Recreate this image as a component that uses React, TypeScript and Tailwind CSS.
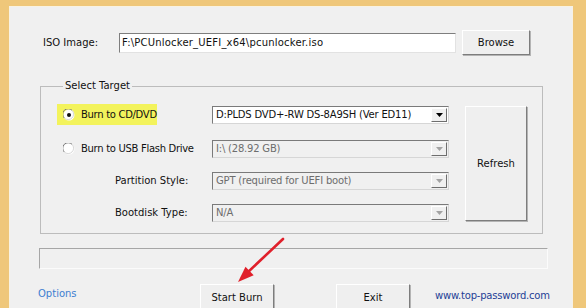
import clsx from "clsx";

const Radio = ({ checked }: { checked?: boolean }) => (
  <svg width="12" height="12" viewBox="0 0 12 12" className="shrink-0">
    <circle cx="6" cy="6" r="5.5" fill="#ffffff" />
    <path d="M1.3 9 A5.2 5.2 0 0 1 9 1.3" fill="none" stroke="#7b7b7b" strokeWidth="1" />
    <path d="M9 1.3 A5.2 5.2 0 0 1 1.3 9" fill="none" stroke="#d8d8d8" strokeWidth="1" />
    {checked && <circle cx="6" cy="6" r="2" fill="#111111" />}
  </svg>
);

type ComboProps = {
  value: string;
  enabled?: boolean;
};

const Combo = ({ value, enabled }: ComboProps) => (
  <div
    className={clsx(
      "flex h-[18px] w-[237px] items-stretch border border-t-[#7a7a7a] border-l-[#7a7a7a] border-r-[#d6d6d6] border-b-[#d6d6d6]",
      enabled ? "bg-white" : "bg-[#f0f0f0]",
    )}
  >
    <span
      className={clsx(
        "flex-1 truncate pl-[3px] leading-[16px] tracking-[-0.2px]",
        enabled ? "text-[#111]" : "text-[#6d6d6d]",
      )}
    >
      {value}
    </span>
    <span className="my-px mr-px flex w-[16px] items-center justify-center border border-t-white border-l-white border-r-[#6e6e6e] border-b-[#6e6e6e] bg-[#f0f0f0]">
      <svg width="7" height="4" viewBox="0 0 7 4">
        <path d="M0 0 H7 L3.5 4 Z" fill={enabled ? "#000" : "#a3a3a3"} />
      </svg>
    </span>
  </div>
);

const Button = ({ label, className }: { label: string; className: string }) => (
  <div
    className={clsx(
      "flex items-center justify-center border border-t-white border-l-white border-r-[#7d7d7d] border-b-[#7d7d7d] bg-[#efefef] text-[#111] shadow-[1px_1px_0_#b4b4b4]",
      className,
    )}
  >
    {label}
  </div>
);

export default function App() {
  return (
    <div className="relative h-[308px] w-[586px] overflow-hidden bg-[#efc77a] pr-[13px] pl-[9px] pt-[6px] font-['DejaVu_Sans',Tahoma,sans-serif] text-[10px] text-[#111]">
      <div className="h-[330px] border-t border-r border-l border-t-[#f8f2e2] border-r-[#f6f1e6] border-l-[#f8f2e2] bg-[#f0f0f0]">
        {/* iso row */}
        <div className="mt-[23px] flex h-[25px] items-center pl-[33px]">
          <span className="w-[76px]">ISO Image:</span>
          <div className="flex h-[20px] w-[337px] items-center border border-t-[#7e7e7e] border-l-[#7e7e7e] border-r-[#e2e2e2] border-b-[#e2e2e2] bg-white pl-[2px] tracking-[0.2px]">
            F:\PCUnlocker_UEFI_x64\pcunlocker.iso
          </div>
          <Button label="Browse" className="ml-[6px] h-[25px] w-[68px]" />
        </div>

        {/* target group */}
        <fieldset className="mt-[25px] ml-[30px] w-[503px] border border-[#bcbcbc] pt-[12px] pb-[10px] pl-[16px]">
          <legend className="ml-[6px] px-[2px] leading-[12px]">Select Target</legend>
          <div className="flex">
            <div className="flex flex-col">
              <div className="flex h-[21px] items-center">
                <div className="flex w-[155px] items-center">
                  <div className="flex h-[21px] w-[100px] items-center gap-[6px] bg-[#f3f35c] pl-[6px]">
                    <Radio checked />
                    <span className="tracking-[-0.3px]">Burn to CD/DVD</span>
                  </div>
                </div>
                <Combo value="D:PLDS DVD+-RW DS-8A9SH (Ver ED11)" enabled />
              </div>
              <div className="mt-[13px] flex h-[21px] items-center">
                <div className="flex w-[155px] items-center gap-[6px] pl-[6px]">
                  <Radio />
                  <span className="tracking-[-0.3px]">Burn to USB Flash Drive</span>
                </div>
                <Combo value="I:\ (28.92 GB)" />
              </div>
              <div className="mt-[11px] flex h-[21px] items-center">
                <span className="w-[155px] pl-[58px]">Partition Style:</span>
                <Combo value="GPT (required for UEFI boot)" />
              </div>
              <div className="mt-[11px] flex h-[21px] items-center">
                <span className="w-[155px] pl-[58px]">Bootdisk Type:</span>
                <Combo value="N/A" />
              </div>
            </div>
            <Button label="Refresh" className="mt-[2px] ml-[16px] h-[115px] w-[62px]" />
          </div>
        </fieldset>

        {/* progress */}
        <div className="mt-[14px] ml-[29px] h-[21px] w-[509px] border border-t-[#a6a6a6] border-l-[#a6a6a6] border-r-[#fbfbfb] border-b-[#fbfbfb]" />

        {/* bottom row */}
        <div className="mt-[15px] flex items-start pl-[28px]">
          <span className="mt-[4px] w-[162px] leading-[12px] text-[#3d7fd1]">Options</span>
          <Button label="Start Burn" className="h-[26px] w-[74px]" />
          <Button label="Exit" className="ml-[62px] h-[26px] w-[74px]" />
          <span className="mt-[6px] ml-[25px] leading-[12px] tracking-[-0.2px] text-[#1f3f96]">
            www.top-password.com
          </span>
        </div>
      </div>

      {/* annotation arrow */}
      <svg
        className="pointer-events-none absolute inset-0"
        width="586"
        height="308"
        viewBox="0 0 586 308"
      >
        <line x1="283" y1="239" x2="247" y2="273" stroke="#e0202b" strokeWidth="2.6" strokeLinecap="round" />
        <path d="M238 282 L245.5 266.7 L253.7 275.3 Z" fill="#e0202b" />
      </svg>
    </div>
  );
}
